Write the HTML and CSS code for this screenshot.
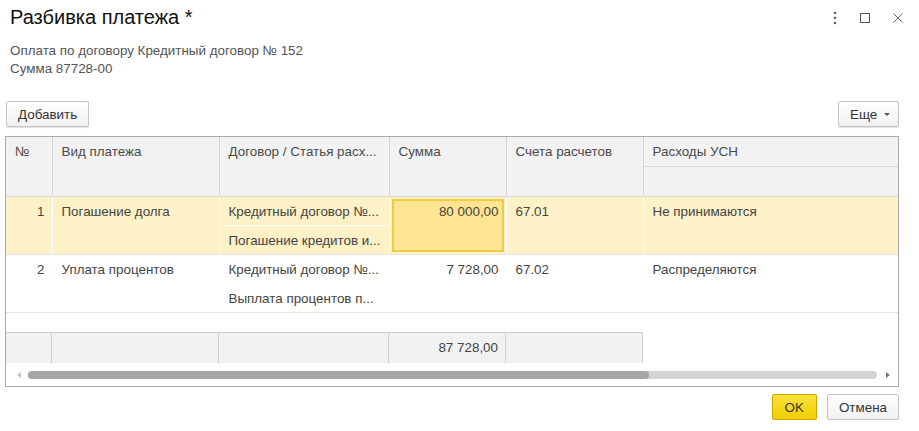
FILE: index.html
```html
<!DOCTYPE html>
<html lang="ru">
<head>
    <meta charset="UTF-8">
    <title>Разбивка платежа</title>
    <link rel="stylesheet" href="styles.css">
</head>
<body>
    <div class="window">
        <div class="title-bar">
            <h1 class="title">Разбивка платежа *</h1>
            <div class="window-controls">
                <svg width="6" height="14" viewBox="0 0 6 14"><circle cx="3" cy="2" r="1.3" fill="#666"/><circle cx="3" cy="7" r="1.3" fill="#666"/><circle cx="3" cy="12" r="1.3" fill="#666"/></svg>
                <svg width="12" height="12" viewBox="0 0 12 12"><rect x="1.5" y="1.5" width="9" height="9" fill="none" stroke="#555" stroke-width="1"/></svg>
                <svg width="12" height="12" viewBox="0 0 12 12"><path d="M1.5 1.5 L10.5 10.5 M10.5 1.5 L1.5 10.5" stroke="#666" stroke-width="1"/></svg>
            </div>
        </div>

        <div class="info">
            <div>Оплата по договору Кредитный договор № 152</div>
            <div>Сумма 87728-00</div>
        </div>

        <div class="toolbar">
            <button type="button" class="btn">Добавить</button>
            <button type="button" class="btn btn-more">Еще <span class="caret"></span></button>
        </div>

        <div class="grid-box">
            <table class="grid">
                <colgroup>
                    <col style="width:46px">
                    <col style="width:167px">
                    <col style="width:170px">
                    <col style="width:117px">
                    <col style="width:137px">
                    <col style="width:255px">
                </colgroup>
                <thead>
                    <tr>
                        <th rowspan="2">№</th>
                        <th rowspan="2">Вид платежа</th>
                        <th rowspan="2">Договор / Статья расх...</th>
                        <th rowspan="2">Сумма</th>
                        <th rowspan="2">Счета расчетов</th>
                        <th class="last">Расходы УСН</th>
                    </tr>
                    <tr>
                        <th class="last"></th>
                    </tr>
                </thead>
                <tbody>
                    <tr class="row-current sub-top">
                        <td rowspan="2" class="num">1</td>
                        <td rowspan="2">Погашение долга</td>
                        <td class="split">Кредитный договор №...</td>
                        <td rowspan="2" class="num focus">80 000,00</td>
                        <td rowspan="2">67.01</td>
                        <td rowspan="2" class="last">Не принимаются</td>
                    </tr>
                    <tr class="row-current sub-bottom">
                        <td>Погашение кредитов и...</td>
                    </tr>
                    <tr class="sub-top">
                        <td rowspan="2" class="num">2</td>
                        <td rowspan="2">Уплата процентов</td>
                        <td class="split">Кредитный договор №...</td>
                        <td rowspan="2" class="num">7 728,00</td>
                        <td rowspan="2">67.02</td>
                        <td rowspan="2" class="last">Распределяются</td>
                    </tr>
                    <tr class="sub-bottom">
                        <td>Выплата процентов п...</td>
                    </tr>
                </tbody>
            </table>

            <div class="empty-space"></div>

            <div class="footer-row">
                <div class="f-cell" style="width:46px"></div>
                <div class="f-cell" style="width:167px"></div>
                <div class="f-cell" style="width:170px"></div>
                <div class="f-cell num" style="width:117px">87 728,00</div>
                <div class="f-cell" style="width:137px"></div>
            </div>

            <div class="scrollbar">
                <span class="arrow-left"></span>
                <div class="track">
                    <div class="thumb"></div>
                </div>
                <span class="arrow-right"></span>
            </div>
        </div>

        <div class="actions">
            <button type="button" class="btn btn-ok">OK</button>
            <button type="button" class="btn">Отмена</button>
        </div>
    </div>
</body>
</html>
```

FILE: styles.css
```css
body {
    margin: 0;
    padding: 0;
    background-color: white;
    font-family: "Liberation Sans", Arial, sans-serif;
    font-size: 13.4px;
    color: #444;
}
.window {
    width: 894px;
    padding: 0 20px 0 5px;
}
.title-bar {
    display: flex;
    justify-content: space-between;
    align-items: center;
    height: 34px;
}
.title {
    margin: 0 0 0 5px;
    font-size: 20px;
    font-weight: normal;
    color: #111;
}
.window-controls {
    display: flex;
    align-items: center;
    gap: 21px;
    margin-right: -5px;
    padding-top: 2px;
}
.info {
    margin: 8px 0 0 5px;
    line-height: 18px;
    color: #555;
}
.toolbar {
    display: flex;
    justify-content: space-between;
    margin-top: 23px;
    padding-left: 1px;
}
.btn {
    font-family: "Liberation Sans", Arial, sans-serif;
    font-size: 13.4px;
    color: #333;
    height: 26px;
    padding: 0 11px;
    background: linear-gradient(#ffffff, #f1f1f1);
    border: 1px solid #c4c4c4;
    border-radius: 2px;
    box-shadow: 0 1px 1px rgba(0, 0, 0, 0.12);
    cursor: pointer;
}
.btn-more {
    padding: 0 8px 0 11px;
}
.caret {
    display: inline-block;
    width: 0;
    height: 0;
    margin-left: 3px;
    border-left: 3px solid transparent;
    border-right: 3px solid transparent;
    border-top: 3px solid #555;
    vertical-align: middle;
}
.grid-box {
    margin-top: 9px;
    border: 1px solid #a9a9a9;
    width: 892px;
    overflow: hidden;
}
.grid {
    border-collapse: collapse;
    table-layout: fixed;
    width: 892px;
}
.grid th {
    background-color: #f2f2f2;
    font-weight: normal;
    color: #4a4a4a;
    text-align: left;
    vertical-align: top;
    height: 22px;
    padding: 7px 9px 0;
    border-right: 1px solid #d6d6d6;
    border-bottom: 1px solid #d6d6d6;
    white-space: nowrap;
    overflow: hidden;
}
.grid th.last,
.grid td.last {
    border-right: none;
}
.grid td {
    height: 26px;
    padding: 2px 9px 0;
    vertical-align: top;
    line-height: 26px;
    color: #444;
    white-space: nowrap;
    overflow: hidden;
    border-right: 1px solid rgba(255, 255, 255, 0.7);
}
.grid td.num {
    text-align: right;
    padding-right: 7px;
}
.grid tr.sub-bottom td {
    border-bottom: 1px solid #e4e4e4;
}
.grid tr.sub-top td[rowspan] {
    border-bottom: 1px solid #e4e4e4;
}
.grid td.split {
    border-bottom: 1px solid rgba(255, 255, 255, 0.7);
}
.row-current td {
    background-color: #fdf1c7;
}
.grid td.focus {
    background-color: #fde592;
    box-shadow: inset 0 0 0 2px #fdf1c7, inset 0 0 0 4px #f3ca3e;
}
.empty-space {
    height: 19px;
}
.footer-row {
    display: flex;
    width: 637px;
    height: 30px;
    border-top: 1px solid #d0d0d0;
}
.f-cell {
    box-sizing: border-box;
    background-color: #f1f1f1;
    border-right: 1px solid #d0d0d0;
    padding: 0 7px;
    line-height: 30px;
    color: #444;
}
.f-cell.num {
    text-align: right;
}
.scrollbar {
    display: flex;
    align-items: center;
    height: 23px;
    padding: 0 8px 0 11px;
}
.arrow-left {
    width: 0;
    height: 0;
    border-top: 3px solid transparent;
    border-bottom: 3px solid transparent;
    border-right: 4px solid #c4c4c4;
    margin-right: 7px;
}
.arrow-right {
    width: 0;
    height: 0;
    border-top: 3px solid transparent;
    border-bottom: 3px solid transparent;
    border-left: 4px solid #777;
    margin-left: 9px;
}
.track {
    flex: 1;
    height: 8px;
    background-color: #d3d3d3;
    border-radius: 4px;
}
.thumb {
    width: 621px;
    height: 8px;
    background-color: #a5a5a5;
    border-radius: 4px;
}
.actions {
    display: flex;
    justify-content: flex-end;
    gap: 10px;
    margin-top: 7px;
}
.btn-ok {
    background: linear-gradient(#fae13a, #f2cf00);
    border-color: #c9a600;
    color: #333;
    padding: 0 12px;
}
```
